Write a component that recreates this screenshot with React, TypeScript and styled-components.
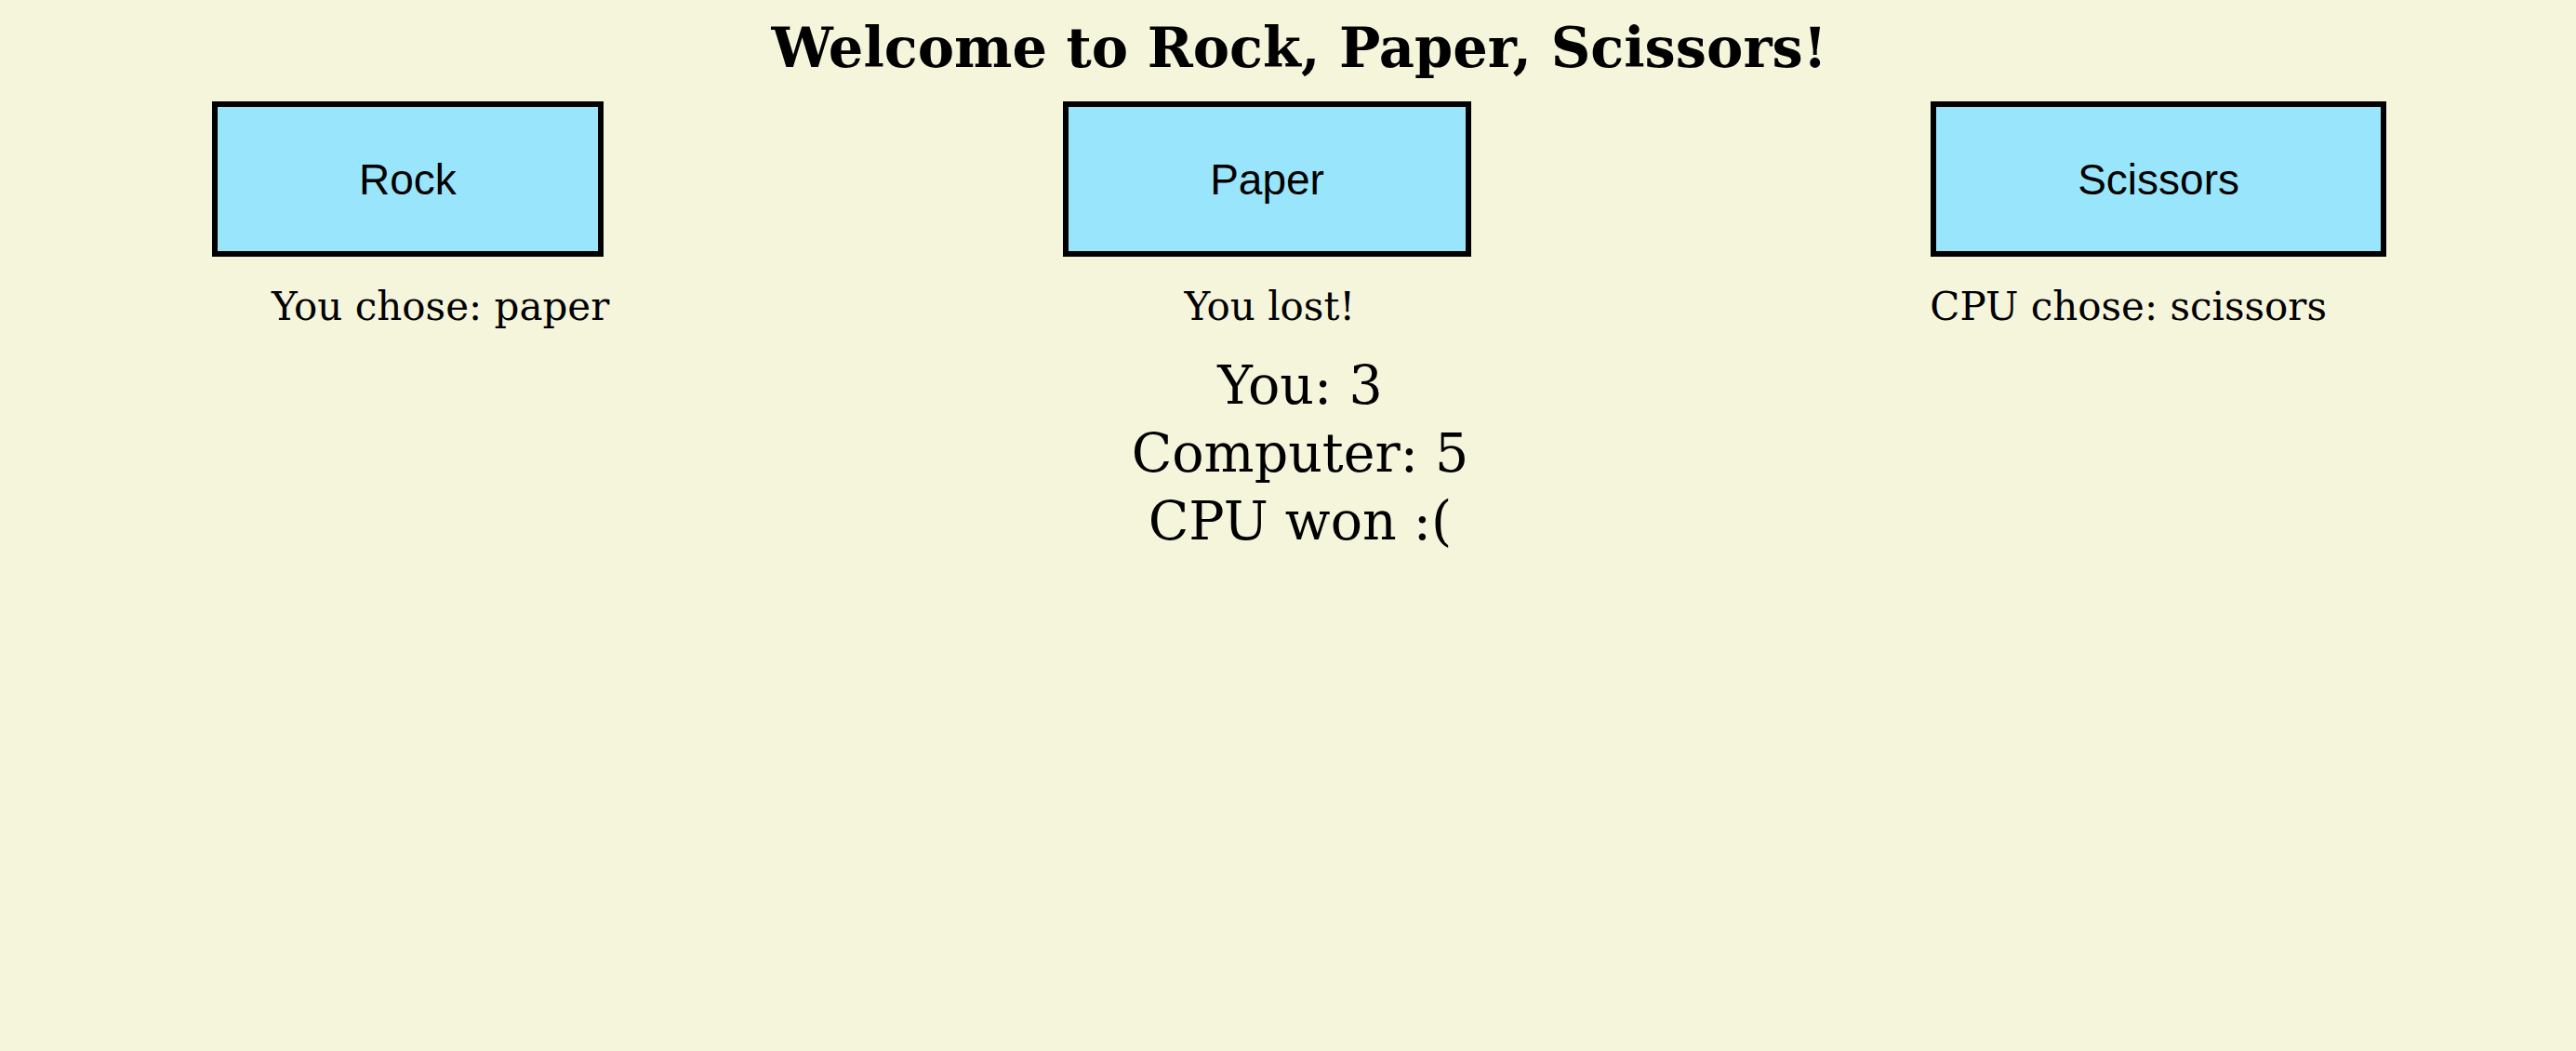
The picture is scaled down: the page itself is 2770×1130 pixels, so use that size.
import React, { useState } from 'react';
import styled, { createGlobalStyle } from 'styled-components';

const GlobalStyle = createGlobalStyle`
  html, body {
    margin: 0;
    padding: 0;
    background: #f5f5dc;
  }
  body {
    font-family: "DejaVu Serif", Georgia, serif;
    color: #000;
  }
`;

const Page = styled.div`
  display: flex;
  flex-direction: column;
  min-height: 1130px;
`;

const Title = styled.h1`
  margin: 0;
  padding: 12px 0 0 24px;
  text-align: center;
  font-size: 59px;
  line-height: 80px;
  font-weight: bold;
`;

const ButtonRow = styled.div`
  display: flex;
  justify-content: space-between;
  padding: 0 204px 0 228px;
  margin-top: 17px;
`;

const ChoiceButton = styled.button`
  height: 167px;
  padding: 0 152px;
  background: #99e6fc;
  border: 6px solid #000;
  border-radius: 0;
  font-family: "Liberation Sans", Arial, sans-serif;
  font-size: 46px;
  color: #000;
  cursor: pointer;
`;

const CaptionRow = styled.div`
  display: flex;
  justify-content: space-between;
  padding: 0 268px 0 292px;
  margin-top: 24px;
`;

const Caption = styled.div`
  font-size: 42px;
  line-height: 60px;
`;

const Score = styled.div`
  margin-top: 18px;
  padding-left: 26px;
  text-align: center;
  font-size: 57px;
  line-height: 73px;
`;

const choices = ['Rock', 'Paper', 'Scissors'];

const App: React.FC = () => {
  const [you] = useState(3);
  const [cpu] = useState(5);

  return (
    <>
      <GlobalStyle />
      <Page>
        <Title>Welcome to Rock, Paper, Scissors!</Title>
        <ButtonRow>
          {choices.map(c => (
            <ChoiceButton key={c}>{c}</ChoiceButton>
          ))}
        </ButtonRow>
        <CaptionRow>
          <Caption>You chose: paper</Caption>
          <Caption>You lost!</Caption>
          <Caption>CPU chose: scissors</Caption>
        </CaptionRow>
        <Score>
          <div>You: {you}</div>
          <div>Computer: {cpu}</div>
          <div>CPU won :(</div>
        </Score>
      </Page>
    </>
  );
};

export default App;
